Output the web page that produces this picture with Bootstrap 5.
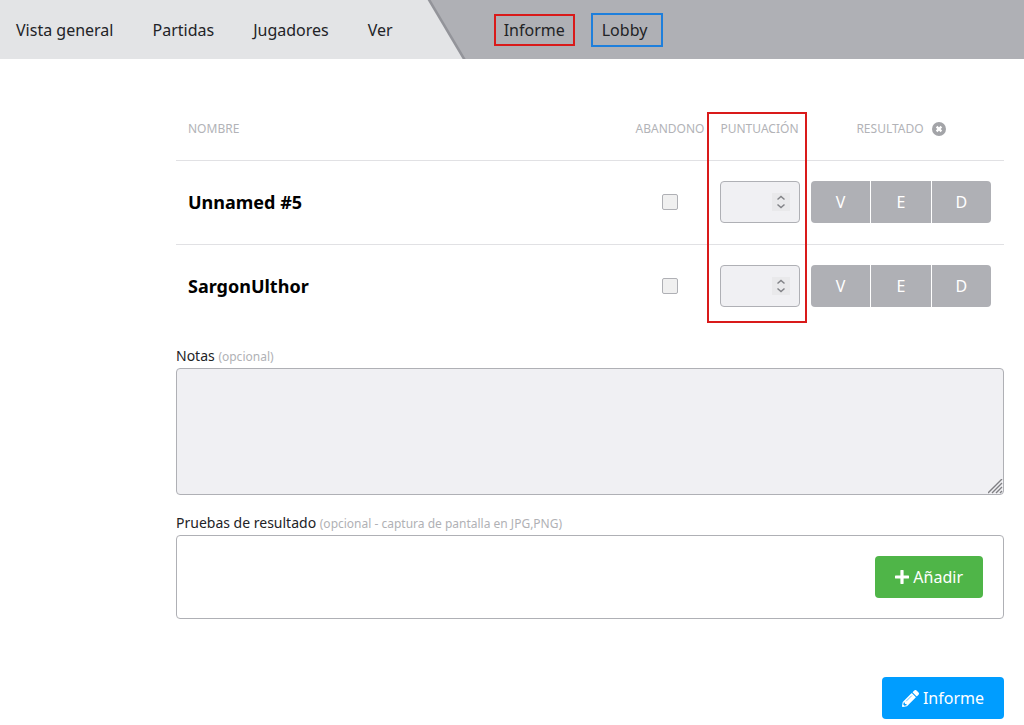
<!DOCTYPE html>
<html lang="es">
<head>
<meta charset="utf-8">
<meta name="viewport" content="width=device-width, initial-scale=1">
<title>Informe</title>
<link href="https://cdn.jsdelivr.net/npm/bootstrap@5.3.0/dist/css/bootstrap.min.css" rel="stylesheet">
<style>
  body { font-family: "Noto Sans", "Open Sans", sans-serif; font-size: 16px; line-height: 24px; color: #222326; background: #fff; }
  .topbar { background: #afb0b5; }
  .topbar a { color: #222326; text-decoration: none; }
  /* slanted panel: dark edge behind, light face in front */
  .slant-edge { background: #93949a; clip-path: polygon(0 0, calc(100% - 35px) 0, 100% 100%, 0 100%); padding-right: 3px; }
  .slant-face { background: #e3e4e6; clip-path: polygon(0 0, calc(100% - 35px) 0, 100% 100%, 0 100%); padding: 18px 70px 17px 16px; gap: 39px; }
  .match-nav { padding-top: 1px; }
  .marked { border: 2px solid #d91a1a; padding: 2px 8px; }
  .marked-blue { border-color: #1e7fdc; padding: 3px 14px 3px 9px; }
  .report { padding: 40px 20px 8px; }
  @media (min-width: 992px) { .report { padding-left: 176px; } }
  .scores { --bs-table-bg: transparent; }
  .scores th, .scores td { border-bottom: 1px solid #e1e1e4; padding: 0; vertical-align: middle; }
  .scores tbody tr:last-child > * { border-bottom: 0; }
  .scores thead th { height: 61px; font-size: 12px; font-weight: 400; line-height: 18px; color: #b2b3b7; }
  .scores tbody > tr > * { height: 84px; }
  .scores tr > th:first-child { padding-left: 12px; }
  .scores tr > :last-child { padding-right: 13px; }
  .scores tbody th { font-size: 18px; font-weight: 700; color: #000; }
  .c-quit { width: 76px; } .c-pts { width: 103px; } .c-res { width: 193px; }
  .scores .form-check-input { display: block; width: 16px; height: 16px; margin: 0 auto; border: 1px solid #afb0b5; border-radius: 2px; background-color: #f0f0f0; }
  .points { width: 80px; height: 42px; border: 1px solid #afb0b5; border-radius: 4px; color: #222326; appearance: textfield; padding: 0 30px 0 10px;
    background: #f0f0f3 url("data:image/svg+xml,%3Csvg xmlns='http://www.w3.org/2000/svg' viewBox='0 0 18 18'%3E%3Cpath fill='%23e9e9eb' d='M0 0h18v18H0z'/%3E%3Cpath fill='none' stroke='%23828388' stroke-width='1.5' d='M5.500 6.500l3.500-3 3.500 3M5.500 11.500l3.500 3 3.500-3'/%3E%3C/svg%3E") no-repeat right 9px center / 18px 18px; }
  .points::-webkit-inner-spin-button { opacity: 0; }
  .outcome { width: 180px; gap: 1px; border-radius: 4px; overflow: hidden; }
  .outcome button { flex: 1 1 0; height: 42px; border: 0; background: #afb0b5; color: #fff; padding: 0; }
  .score-mark { position: absolute; top: 13px; bottom: 5px; right: 197px; width: 100px; border: 2px solid #d91a1a; pointer-events: none; }
  .field-label { margin-top: 18px; padding-bottom: 1px; font-size: 14px; line-height: 20px; color: #222326; }
  .hint { font-size: 12px; color: #b0b1b5; }
  .notes { display: block; height: 127px; border: 1px solid #afb0b5; border-radius: 4px; background: #f0f0f3; }
  .notes::-webkit-resizer { background: url("data:image/svg+xml,%3Csvg xmlns='http://www.w3.org/2000/svg' viewBox='0 0 15 15'%3E%3Cpath fill='none' stroke='%23808084' stroke-width='1.4' d='M0 14L14 0M4 14L14 4M8 14l6-6M12 14l2-2'/%3E%3C/svg%3E") no-repeat center / 100% 100%; }
  .proof { border: 1px solid #afb0b5; border-radius: 4px; padding: 20px; }
  .action { display: inline-flex; align-items: center; gap: 4px; height: 42px; border: 0; border-radius: 4px; padding: 0 20px; color: #fff; }
  .action-add { background: #4fb548; }
  .action-send { background: #009dff; margin-top: 58px; }
</style>
</head>
<body>
<header class="topbar d-flex flex-wrap">
  <div class="slant-edge">
    <nav class="slant-face d-flex flex-wrap" aria-label="Principal">
      <a href="#">Vista general</a>
      <a href="#">Partidas</a>
      <a href="#">Jugadores</a>
      <a href="#">Ver</a>
    </nav>
  </div>
  <nav class="match-nav d-flex align-items-center ms-4 ps-1" aria-label="Partida">
    <a class="marked me-3" href="#">Informe</a>
    <a class="marked marked-blue" href="#">Lobby</a>
  </nav>
</header>

<main class="report">
  <form>
    <div class="position-relative">
      <table class="scores table mb-0">
        <colgroup><col><col class="c-quit"><col class="c-pts"><col class="c-res"></colgroup>
        <thead>
          <tr>
            <th scope="col">NOMBRE</th>
            <th scope="col" class="text-center">ABANDONO</th>
            <th scope="col" class="text-center">PUNTUACIÓN</th>
            <th scope="col">
              <div class="d-flex align-items-center justify-content-center gap-2">RESULTADO
                <svg width="14" height="14" viewBox="0 0 14 14" aria-hidden="true"><circle cx="7" cy="7" r="7" fill="#a3a4a8"/><path d="M4.600 4.600l4.800 4.800M9.400 4.600L4.600 9.400" stroke="#fff" stroke-width="2.200"/></svg>
              </div>
            </th>
          </tr>
        </thead>
        <tbody>
          <tr>
            <th scope="row">Unnamed #5</th>
            <td><input class="form-check-input" type="checkbox" aria-label="Abandono de Unnamed #5"></td>
            <td class="text-center"><input class="points" type="number" aria-label="Puntuación de Unnamed #5"></td>
            <td><div class="outcome d-flex"><button type="button">V</button><button type="button">E</button><button type="button">D</button></div></td>
          </tr>
          <tr>
            <th scope="row">SargonUlthor</th>
            <td><input class="form-check-input" type="checkbox" aria-label="Abandono de SargonUlthor"></td>
            <td class="text-center"><input class="points" type="number" aria-label="Puntuación de SargonUlthor"></td>
            <td><div class="outcome d-flex"><button type="button">V</button><button type="button">E</button><button type="button">D</button></div></td>
          </tr>
        </tbody>
      </table>
      <div class="score-mark"></div>
    </div>

    <label class="field-label d-block" for="notes">Notas <span class="hint">(opcional)</span></label>
    <textarea class="notes w-100" id="notes"></textarea>

    <div class="field-label" id="proof-label">Pruebas de resultado <span class="hint">(opcional - captura de pantalla en JPG,PNG)</span></div>
    <div class="proof d-flex justify-content-end" role="group" aria-labelledby="proof-label">
      <button class="action action-add" type="button">
        <svg width="14" height="14" viewBox="0 0 14 14" aria-hidden="true"><path d="M7 1v12M1 7h12" stroke="#fff" stroke-width="3.200" stroke-linecap="round"/></svg>
        Añadir
      </button>
    </div>

    <div class="d-flex justify-content-end">
      <button class="action action-send" type="submit">
        <svg width="17" height="17" viewBox="0 0 512 512" fill="#fff" aria-hidden="true"><path d="M498 142l-46 46c-5 5-12 5-17 0L324 77c-5-5-5-12 0-17l46-46c19-19 49-19 68 0l60 60c19 19 19 49 0 68zm-214-42L22 362 0 484c-3 16 12 30 28 28l122-22 262-262c5-5 5-12 0-17L301 100c-5-5-12-5-17 0z"/><path d="M134 330l154-154" stroke="#009dff" stroke-width="18" stroke-linecap="round"/><path d="M88 424h48v36l-65 12-32-32 12-65h37z" fill="#009dff"/></svg>
        Informe
      </button>
    </div>
  </form>
</main>
<script src="https://cdn.jsdelivr.net/npm/bootstrap@5.3.0/dist/js/bootstrap.bundle.min.js"></script>
</body>
</html>
